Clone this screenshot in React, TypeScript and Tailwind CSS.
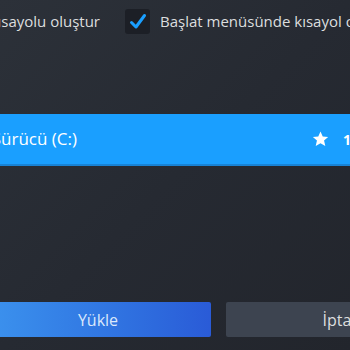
const FONT = "font-['Open_Sans','Liberation_Sans',sans-serif]";

function CheckIcon() {
  return (
    <svg width="20" height="20" viewBox="0 0 20 20" fill="none">
      <path d="M3.5 10.5 L8 15 L16.5 3.5" stroke="#1a9fff" strokeWidth="3" strokeLinecap="round" strokeLinejoin="round" />
    </svg>
  );
}

function StarIcon() {
  return (
    <svg width="17" height="16" viewBox="0 0 24 23" fill="#ffffff">
      <path d="M12 0.8 L15.2 8 L23 8.7 L17.1 13.8 L18.9 21.6 L12 17.5 L5.1 21.6 L6.9 13.8 L1 8.7 L8.8 8 Z" />
    </svg>
  );
}

export default function App() {
  return (
    <div className={`w-[350px] h-[350px] overflow-hidden bg-gradient-to-br from-[#2c3139] via-[#262a32] to-[#22252c] ${FONT}`}>
      {/* options */}
      <div className="flex items-center pt-[9px] -ml-[250px]">
        <div className="w-[350px] shrink-0 text-right text-[15px] text-[#dcdedf]">Masaüstünde kısayolu oluştur</div>
        <div className="ml-[25px] w-[25px] h-[25px] shrink-0 rounded-[3px] bg-[#1c1f26] flex items-center justify-center">
          <CheckIcon />
        </div>
        <div className="ml-[10px] shrink-0 whitespace-nowrap text-[15px] text-[#dcdedf]">Başlat menüsünde kısayol oluştur</div>
      </div>

      {/* drive */}
      <div className="mt-[80px] h-[52px] bg-[#1a9fff] border-b-2 border-[#1883d6] flex items-center text-white">
        <div className="w-[77px] shrink-0 overflow-visible flex justify-end">
          <span className="whitespace-nowrap text-[17px]">Yerel Sürücü (C:)</span>
        </div>
        <div className="ml-auto flex items-center gap-[14px] -mr-[77px]">
          <StarIcon />
          <span className="whitespace-nowrap text-[14px] font-bold w-[84px]">143,6 GB</span>
        </div>
      </div>

      {/* actions */}
      <div className="mt-[136px] flex gap-[15px] -ml-[15px]">
        <button className="w-[226px] h-[35px] shrink-0 rounded-[2px] bg-gradient-to-r from-[#3c93ee] to-[#2a5bd7] text-[16px] text-[#dbe8fb]">
          Yükle
        </button>
        <button className="w-[226px] h-[35px] shrink-0 rounded-[2px] bg-[#3d4450] text-[16px] text-[#dcdedf]">
          İptal
        </button>
      </div>
    </div>
  );
}
